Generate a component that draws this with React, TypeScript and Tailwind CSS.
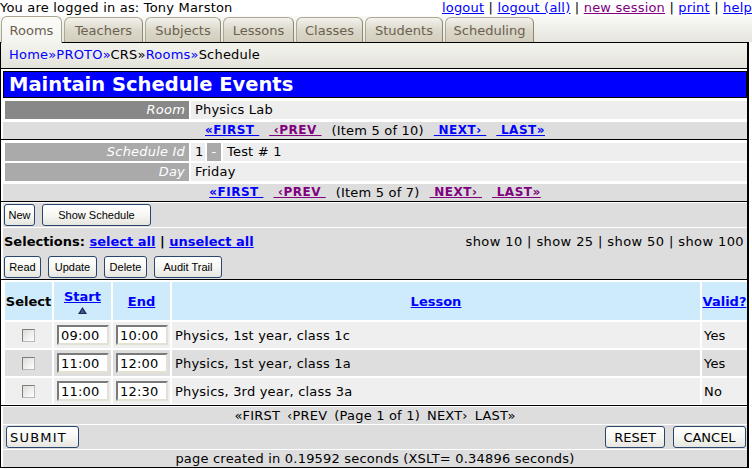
import React from "react";

const tabs = [
  { label: "Rooms", w: "w-[61px]", active: true },
  { label: "Teachers", w: "w-[79px]", active: false },
  { label: "Subjects", w: "w-[76px]", active: false },
  { label: "Lessons", w: "w-[71px]", active: false },
  { label: "Classes", w: "w-[67px]", active: false },
  { label: "Students", w: "w-[78px]", active: false },
  { label: "Scheduling", w: "w-[89px]", active: false },
];

const BLUE = "text-[#0000ff]";
const PURPLE = "text-[#800080]";

function Btn({ children, w }: { children: React.ReactNode; w: string }) {
  return (
    <div
      className={`${w} h-[22px] shrink-0 rounded-[3px] border border-[#2a466f] bg-gradient-to-b from-white via-[#f7f7f4] to-[#e6e5df] font-['Liberation_Sans',sans-serif] text-[11px] tracking-normal leading-none text-black flex items-center justify-center`}
    >
      {children}
    </div>
  );
}

function BigBtn({ children, w, extra = "" }: { children: React.ReactNode; w: string; extra?: string }) {
  return (
    <div
      className={`${w} h-[22px] shrink-0 rounded-[3px] border border-[#2a466f] bg-gradient-to-b from-white via-[#f7f7f4] to-[#e6e5df] text-[13px] leading-none text-black flex items-center ${extra}`}
    >
      {children}
    </div>
  );
}

function Nav({ text, colors }: { text: string; colors: string[] }) {
  const link = "font-bold text-[12px] tracking-[0.5px] underline";
  return (
    <div className="h-[17px] bg-[#dddddd] flex justify-center items-center gap-[10px] whitespace-pre">
      <span className={`${link} ${colors[0]}`}>{"«FIRST\u00a0"}</span>
      <span className={`${link} ${colors[1]}`}>{"\u00a0‹PREV\u00a0"}</span>
      <span>{text}</span>
      <span className={`${link} ${colors[2]}`}>{"\u00a0NEXT›\u00a0"}</span>
      <span className={`${link} ${colors[3]}`}>{"\u00a0LAST»"}</span>
    </div>
  );
}

function CheckBox() {
  return (
    <span className="block w-[13px] h-[13px] border border-t-[#7c7c7c] border-l-[#7c7c7c] border-r-[#b8b8b8] border-b-[#b8b8b8] bg-gradient-to-br from-[#dcdcd8] to-white" />
  );
}

function TimeInput({ value }: { value: string }) {
  return (
    <input
      readOnly
      value={value}
      className="w-[52px] h-[20px] border-2 border-t-[#7a7a7a] border-l-[#7a7a7a] border-r-[#e4e1d4] border-b-[#e4e1d4] bg-white px-[2px] text-[13px] leading-none text-black outline-none"
    />
  );
}

const rows = [
  { start: "09:00", end: "10:00", lesson: "Physics, 1st year, class 1c", valid: "Yes", bg: "bg-[#efefef]" },
  { start: "11:00", end: "12:00", lesson: "Physics, 1st year, class 1a", valid: "Yes", bg: "bg-[#dedede]" },
  { start: "11:00", end: "12:30", lesson: "Physics, 3rd year, class 3a", valid: "No", bg: "bg-[#efefef]" },
];

export default function App() {
  return (
    <div className="w-[752px] h-[469px] overflow-hidden bg-white text-black font-['DejaVu_Sans',sans-serif] text-[13px] leading-[15px] tracking-[0.2px]">
      {/* top line */}
      <div className="flex justify-between h-[16px] whitespace-nowrap">
        <span>You are logged in as: Tony Marston</span>
        <span className="whitespace-pre">
          <a className={`${BLUE} underline`}>logout</a>
          {" | "}
          <a className={`${BLUE} underline`}>logout (all)</a>
          {" | "}
          <a className={`${PURPLE} underline`}>new session</a>
          {" | "}
          <a className={`${BLUE} underline`}>print</a>
          {" | "}
          <a className={`${BLUE} underline`}>help</a>
        </span>
      </div>

      {/* tabs */}
      <div className="h-[26px] flex items-end gap-[2px] pl-[1px] bg-gradient-to-b from-[#f9f9f6] to-[#e5e5dd]">
        {tabs.map((t) =>
          t.active ? (
            <div
              key={t.label}
              className={`${t.w} relative z-10 -mb-px h-[27px] shrink-0 rounded-t-[6px] border border-b-0 border-[#aba590] bg-gradient-to-b from-[#fbfbf8] to-[#f4f4ef] text-[#6b6151] tracking-normal flex justify-center pt-[6px]`}
            >
              {t.label}
            </div>
          ) : (
            <div
              key={t.label}
              className={`${t.w} h-[25px] shrink-0 rounded-t-[6px] border border-b-0 border-[#aea892] border-r-[#8d8773] bg-gradient-to-b from-[#f3f2ec] via-[#dcd8ca] to-[#d2cdbc] text-[#6b6151] tracking-normal flex justify-center pt-[5px]`}
            >
              {t.label}
            </div>
          )
        )}
      </div>

      {/* breadcrumb */}
      <div className="w-[749px] h-[26px] border-t border-l border-r-2 border-black bg-gradient-to-b from-[#f4f4ef] to-[#e3e3db] pl-[8px] pt-[4px] whitespace-nowrap">
        <span className={BLUE}>Home»</span>
        <span className={BLUE}>PROTO»</span>
        <span>CRS»</span>
        <span className={BLUE}>Rooms»</span>
        <span>Schedule</span>
      </div>

      {/* main box */}
      <div className="w-[749px] border-t border-l border-r-2 border-b border-black">
        {/* title */}
        <div className="ml-[2px] mt-[2px] h-[27px] border border-black bg-[#0000ff] text-white font-bold text-[19.5px] tracking-normal leading-none pl-[5px] flex items-center">
          Maintain Schedule Events
        </div>

        {/* parent section */}
        <div className="border-b border-black pl-[2px] pt-[3px] flex flex-col">
          <div className="flex gap-[2px] pl-[2px] h-[18px] leading-[18px]">
            <div className="w-[184px] shrink-0 bg-[#888888] text-white italic text-right pr-[4px]">Room</div>
            <div className="flex-1 bg-[#eeeeee] pl-[4px]">Physics Lab</div>
          </div>
          <div className="mt-[3px]">
            <Nav text="(Item 5 of 10)" colors={[BLUE, PURPLE, BLUE, BLUE]} />
          </div>
        </div>

        {/* child section */}
        <div className="border-b border-black pl-[2px] pt-[3px] flex flex-col">
          <div className="flex gap-[2px] pl-[2px] h-[18px] leading-[18px]">
            <div className="w-[184px] shrink-0 bg-[#aaaaaa] text-white italic text-right pr-[4px]">Schedule Id</div>
            <div className="w-[14px] shrink-0 bg-[#eeeeee] pl-[4px]">1</div>
            <div className="w-[14px] shrink-0 bg-[#aaaaaa] text-white text-center">-</div>
            <div className="flex-1 bg-[#eeeeee] pl-[4px]">Test # 1</div>
          </div>
          <div className="mt-[2px] flex gap-[2px] pl-[2px] h-[18px] leading-[18px]">
            <div className="w-[184px] shrink-0 bg-[#aaaaaa] text-white italic text-right pr-[4px]">Day</div>
            <div className="flex-1 bg-[#eeeeee] pl-[4px]">Friday</div>
          </div>
          <div className="mt-[3px]">
            <Nav text="(Item 5 of 7)" colors={[BLUE, PURPLE, PURPLE, PURPLE]} />
          </div>
        </div>

        {/* action section */}
        <div className="border-b border-black pl-[2px] pt-[1px] flex flex-col">
          <div className="h-[24px] bg-[#dddddd] flex items-start pt-[1px] pl-[1px] gap-[7px]">
            <Btn w="w-[31px]">New</Btn>
            <Btn w="w-[109px]">Show Schedule</Btn>
          </div>
          <div className="mt-[1px] h-[51px] bg-[#dddddd] flex flex-col pt-[6px]">
            <div className="flex justify-between pl-[1px] pr-[3px] h-[15px] whitespace-pre">
              <span className="font-bold tracking-normal">
                Selections: <a className={`${BLUE} underline`}>select all</a> | <a className={`${BLUE} underline`}>unselect all</a>
              </span>
              <span className="tracking-[0.4px]">show 10 | show 25 | show 50 | show 100</span>
            </div>
            <div className="mt-[7px] flex gap-[7px] pl-[1px]">
              <Btn w="w-[37px]">Read</Btn>
              <Btn w="w-[49px]">Update</Btn>
              <Btn w="w-[43px]">Delete</Btn>
              <Btn w="w-[68px]">Audit Trail</Btn>
            </div>
          </div>
        </div>

        {/* table */}
        <div className="border-b border-black pl-[4px] pt-[2px] pb-px grid grid-cols-[47px_57px_57px_1fr_45px] gap-[2px]">
          <div className="h-[38px] bg-[#cdebfb] flex items-center justify-center font-bold tracking-normal">Select</div>
          <div className="h-[38px] bg-[#cdebfb] flex flex-col items-center justify-center gap-[3px]">
            <a className={`${BLUE} underline font-bold tracking-normal`}>Start</a>
            <svg width="9" height="7" viewBox="0 0 9 7">
              <polygon points="4.5,0 9,7 0,7" fill="#1d2b5c" />
              <polygon points="4.5,2 6.5,6 2.5,6" fill="#4a5a8c" />
            </svg>
          </div>
          <div className="h-[38px] bg-[#cdebfb] flex items-center justify-center">
            <a className={`${BLUE} underline font-bold tracking-normal`}>End</a>
          </div>
          <div className="h-[38px] bg-[#cdebfb] flex items-center justify-center">
            <a className={`${BLUE} underline font-bold tracking-normal`}>Lesson</a>
          </div>
          <div className="h-[38px] bg-[#cdebfb] flex items-center justify-center">
            <a className={`${BLUE} underline font-bold tracking-normal`}>Valid?</a>
          </div>
          {rows.map((r, i) => (
            <React.Fragment key={i}>
              <div className={`h-[26px] ${r.bg} flex items-center justify-center`}>
                <CheckBox />
              </div>
              <div className={`h-[26px] ${r.bg} flex items-center pl-[3px]`}>
                <TimeInput value={r.start} />
              </div>
              <div className={`h-[26px] ${r.bg} flex items-center pl-[3px]`}>
                <TimeInput value={r.end} />
              </div>
              <div className={`h-[26px] ${r.bg} flex items-center pl-[3px] whitespace-nowrap`}>{r.lesson}</div>
              <div className={`h-[26px] ${r.bg} flex items-center pl-[2px]`}>{r.valid}</div>
            </React.Fragment>
          ))}
        </div>

        {/* bottom section */}
        <div className="pl-[2px] pt-[1px] flex flex-col">
          <div className="h-[17px] bg-[#dddddd] flex justify-center items-center gap-[7px] whitespace-pre">
            <span>«FIRST</span>
            <span>‹PREV</span>
            <span>(Page 1 of 1)</span>
            <span>NEXT›</span>
            <span>LAST»</span>
          </div>
          <div className="mt-[1px] h-[24px] bg-[#dddddd] flex items-start pt-[1px] pl-[3px] pr-[1px]">
            <BigBtn w="w-[73px]" extra="pl-[3px] tracking-[1.2px]">SUBMIT</BigBtn>
            <div className="ml-auto flex gap-[8px]">
              <BigBtn w="w-[60px]" extra="justify-center tracking-normal">RESET</BigBtn>
              <BigBtn w="w-[73px]" extra="justify-center tracking-normal">CANCEL</BigBtn>
            </div>
          </div>
          <div className="mt-[1px] h-[17px] bg-[#dddddd] flex items-center justify-center whitespace-pre">
            page created in 0.19592 seconds (XSLT= 0.34896 seconds)
          </div>
        </div>
      </div>
    </div>
  );
}
